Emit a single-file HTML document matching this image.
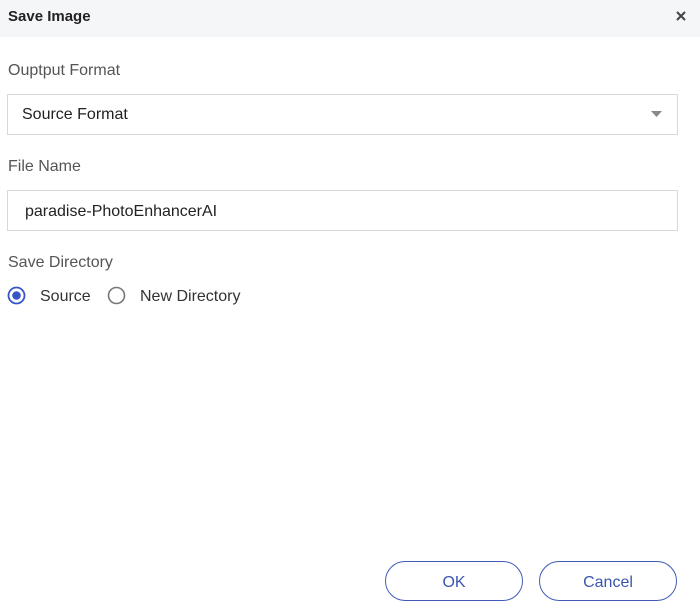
<!DOCTYPE html>
<html><head><style>
body{margin:0;width:700px;height:610px;background:#fff;font-family:"Liberation Sans",sans-serif;position:relative;overflow:hidden;color:#333}
.hd{position:absolute;left:0;top:0;width:700px;height:37px;background:#f5f6f8}
.t{position:absolute;font-size:16px}
.box{position:absolute;left:7px;width:669px;height:39px;border:1px solid #d8d8d8;background:#fff}
.btn{position:absolute;top:561px;width:136px;height:38px;border:1.5px solid #3f5bb5;border-radius:20px;color:#3a55b0;font-size:16px;text-align:center;line-height:41px}
</style></head><body>
<div class="hd"></div>
<div class="t" style="left:8px;top:8px;font-weight:bold;font-size:15px;color:#222">Save Image</div>
<svg style="position:absolute;left:675px;top:10px" width="12" height="12"><path d="M2 2L10 10M10 2L2 10" stroke="#444" stroke-width="2"/></svg>
<div class="t" style="left:8px;top:62px;color:#555">Ouptput Format</div>
<div class="box" style="top:94px"></div>
<div class="t" style="left:22px;top:106px;color:#222">Source Format</div>
<svg style="position:absolute;left:651px;top:111px" width="12" height="7"><path d="M0 0H11L5.5 6Z" fill="#888"/></svg>
<div class="t" style="left:8px;top:158px;color:#555">File Name</div>
<div class="box" style="top:190px"></div>
<div class="t" style="left:25px;top:203px;color:#222">paradise-PhotoEnhancerAI</div>
<div class="t" style="left:8px;top:254px;color:#555">Save Directory</div>
<svg style="position:absolute;left:7px;top:286px" width="19" height="19"><circle cx="9.5" cy="9.5" r="8" fill="none" stroke="#3656c8" stroke-width="1.8"/><circle cx="9.5" cy="9.5" r="4.3" fill="#3656c8"/></svg>
<div class="t" style="left:40px;top:288px;color:#333">Source</div>
<svg style="position:absolute;left:107px;top:286px" width="19" height="19"><circle cx="9.5" cy="9.5" r="8" fill="none" stroke="#777" stroke-width="1.6"/></svg>
<div class="t" style="left:140px;top:288px;color:#333">New Directory</div>
<div class="btn" style="left:385px">OK</div>
<div class="btn" style="left:539px">Cancel</div>
</body></html>
